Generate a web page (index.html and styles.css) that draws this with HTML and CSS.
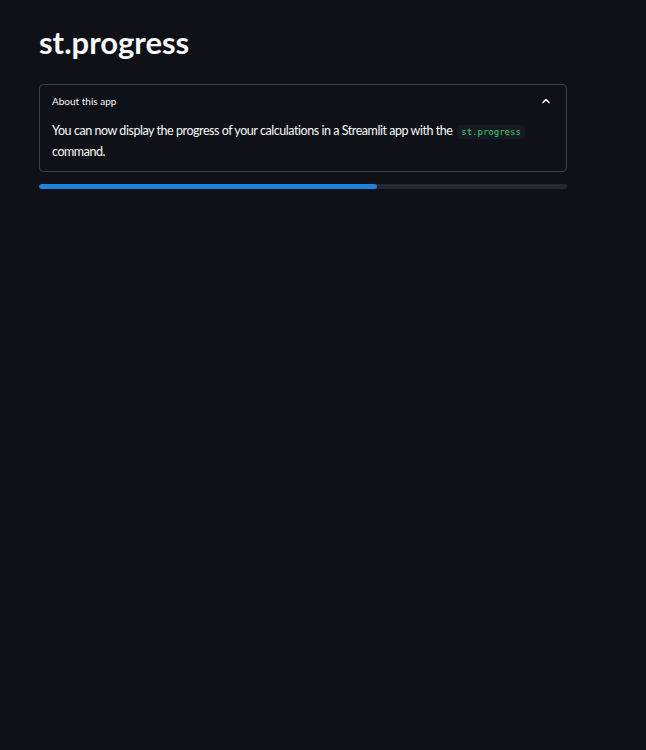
FILE: index.html
```html
<!DOCTYPE html>
<html>
<head>
<meta charset="utf-8">
<link rel="stylesheet" href="styles.css">
</head>
<body>
<main class="main">
  <h1 class="title">st.progress</h1>
  <section class="expander">
    <div class="exp-header">
      <span class="exp-label">About this app</span>
      <svg class="chevron" width="10" height="10" viewBox="0 0 10 10"><path d="M2 6.5 L5 3.5 L8 6.5" fill="none" stroke="#fafafa" stroke-width="1.6" stroke-linecap="round" stroke-linejoin="round"/></svg>
    </div>
    <p class="exp-body">You can now display the progress of your calculations in a Streamlit app with the <code class="code">st.progress</code> command.</p>
  </section>
  <div class="progress"><div class="progress-fill" style="width:64%"></div></div>
</main>
</body>
</html>
```
FILE: styles.css
```css
html, body {
  margin: 0;
  padding: 0;
  background: #0e1117;
  color: #fafafa;
  font-family: "Lato", "Open Sans", sans-serif;
}
.main {
  width: 528px;
  padding: 22px 39px;
}
.title {
  margin: 0 0 22px 0;
  font-size: 31px;
  font-weight: 700;
  line-height: 40px;
}
.expander {
  border: 1px solid #3d3f47;
  border-radius: 4px;
  padding: 0 12px 10px 12px;
}
.exp-header {
  display: flex;
  justify-content: space-between;
  align-items: center;
  height: 32px;
  margin-bottom: 4px;
}
.exp-label {
  font-size: 10px;
}
.chevron {
  margin-right: 3px;
}
.exp-body {
  margin: 0;
  font-size: 12.5px;
  letter-spacing: -0.45px;
  line-height: 19px;
}
.code {
  font-family: "DejaVu Sans Mono", monospace;
  font-size: 9px;
  letter-spacing: 0;
  color: #3dd56d;
  background: #171a21;
  padding: 2px 4px;
  margin-left: 2px;
  border-radius: 3px;
}
.progress {
  margin-top: 12px;
  height: 5px;
  background: #262730;
  border-radius: 3px;
  overflow: hidden;
}
.progress-fill {
  height: 100%;
  background: #1c83e1;
  border-radius: 3px;
}
```
